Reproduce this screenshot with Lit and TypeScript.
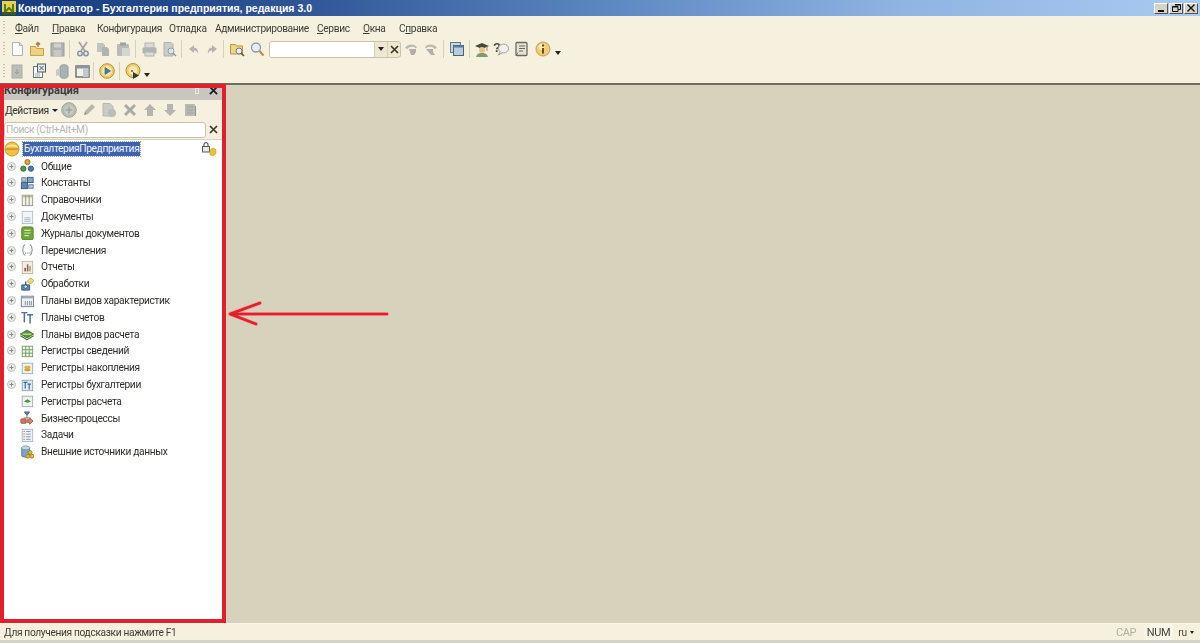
import { LitElement, html, css, svg } from "lit";
import { customElement } from "lit/decorators.js";

const ic: Record<string, any> = {
  doc: svg`<path d="M3.5 1.500h7l3 3v10h-10z" fill="#fdfdfb" stroke="#a9b3b8"/><path d="M10.500 1.500v3h3" fill="#dde4ea" stroke="#a9b3b8"/>`,
  open: svg`<path d="M1.500 5.500h5l1 2h7v7h-13z" fill="#efd27c" stroke="#c4a14f"/><path d="M9 6V2M7 3.500l2-2 2 2" fill="none" stroke="#b8762e" stroke-width="1.300"/>`,
  save: svg`<rect x="2" y="2" width="13" height="13" fill="#aeb3b1" stroke="#989d9b"/><rect x="5" y="2.500" width="7" height="4" fill="#d0d2cc"/><rect x="4.500" y="9" width="8" height="6" fill="#c6c8c2"/>`,
  cut: svg`<path d="M4 1l6 9M12 1L6 10" stroke="#a0a5a0" stroke-width="1.700" fill="none"/><circle cx="5" cy="12.500" r="2.200" fill="none" stroke="#8494a1" stroke-width="1.500"/><circle cx="11" cy="12.500" r="2.200" fill="none" stroke="#8494a1" stroke-width="1.500"/>`,
  copy: svg`<path d="M2 2h6l2 2v7H2z" fill="#c0c4c0"/><path d="M7 6h5l2 2v7H7z" fill="#afb4b0"/>`,
  paste: svg`<rect x="2" y="3" width="12" height="12" rx="1" fill="#b8bbb5"/><rect x="5" y="1.500" width="6" height="3" fill="#9ea39f"/><rect x="7" y="7" width="8" height="8" fill="#d3d5d0"/>`,
  print: svg`<rect x="4" y="2" width="9" height="5" fill="#dadad3" stroke="#b2b4af"/><rect x="1.500" y="6.500" width="14" height="6" rx="1" fill="#b0b4b0"/><rect x="4" y="11" width="9" height="4" fill="#dcdcd5" stroke="#b2b4af"/>`,
  preview: svg`<path d="M3 1.500h7l2 2V15H3z" fill="#c9ccc8" stroke="#afb2ae"/><circle cx="10" cy="10" r="3" fill="#e2e6e6" stroke="#959a9b"/><path d="M12 12l3 3" stroke="#959a9b" stroke-width="1.500"/>`,
  undo: svg`<path d="M8 4L3 8l5 4V9.500c2 0 3 1 4 3 .500-3-1-6-4-6z" fill="#b3b6b0"/>`,
  redo: svg`<path d="M8 4l5 4-5 4V9.500c-2 0-3 1-4 3-.500-3 1-6 4-6z" fill="#b3b6b0"/>`,
  findall: svg`<path d="M1.500 3.500h5l1 1.500h6v8h-12z" fill="#f0d77f" stroke="#b9953f"/><circle cx="10" cy="10" r="3" fill="#e8eef0" stroke="#6d7a80"/><path d="M12 12l3 3" stroke="#7c5a34" stroke-width="1.700"/>`,
  find: svg`<circle cx="7" cy="6.500" r="4.500" fill="#e6eef2" stroke="#8c9aa3" stroke-width="1.300"/><path d="M10.500 10l4 4.500" stroke="#b5924e" stroke-width="2.200"/>`,
  back: svg`<path d="M2 7c2-4 9-5 12-1l-1 1.500C11 5 6 5.500 4.500 8z" fill="#b7b9b1"/><path d="M6 8h7v3l-2 3H8z" fill="#aeb0a9"/>`,
  fwd: svg`<path d="M14 7c-2-4-9-5-12-1l1 1.500C5 5 10 5.500 11.500 8z" fill="#b7b9b1"/><path d="M3 8h7v3l2 3H8z" fill="#aeb0a9"/>`,
  windows: svg`<rect x="1.500" y="1.500" width="10" height="10" fill="#c6d6e5" stroke="#68798a"/><rect x="4.500" y="4.500" width="10" height="10" fill="#b9cbdc" stroke="#4f6172"/><rect x="4.500" y="4.500" width="10" height="2" fill="#5d7a98"/>`,
  student: svg`<path d="M1 5l7-3 7 3-7 3z" fill="#3f4a3c"/><circle cx="8" cy="9" r="3" fill="#e7c290"/><path d="M2 16c1-4 4-4 6-4s5 0 6 4z" fill="#7d9c6f"/><path d="M13 5v5" stroke="#b08a3a"/>`,
  helpq: svg`<text x="0" y="11" font-size="13" font-weight="700" font-family="Liberation Sans" fill="#4a4a42">?</text><ellipse cx="10.500" cy="7.500" rx="5" ry="4.500" fill="#eef0ec" stroke="#9ba098"/><path d="M7 11l-1.500 3 4-2.500" fill="#e6e8e2" stroke="#9ba098"/>`,
  book: svg`<rect x="3" y="1.500" width="11" height="13" rx="1" fill="#e5e3d8" stroke="#6a6a60" stroke-width="1.300"/><path d="M6 5h6M6 7.500h6M6 10h4" stroke="#6a6a60"/><path d="M3 14.500l2-3" stroke="#6a6a60"/>`,
  info: svg`<circle cx="8" cy="8" r="7" fill="#eecb7d" stroke="#c99c48"/><circle cx="6.500" cy="6" r="3" fill="#f8e8bb"/><rect x="7" y="7" width="2" height="5.500" fill="#6f4e12"/><rect x="7" y="3.500" width="2" height="2" fill="#6f4e12"/>`,
  gr1: svg`<rect x="3" y="2" width="10" height="13" fill="#bbbeb8" stroke="#abaea8"/><path d="M8 6v5M6 9l2 2 2-2" stroke="#999c97" fill="none"/>`,
  gr2: svg`<rect x="2.500" y="3.500" width="9" height="11" fill="#fff" stroke="#6f7a80"/><rect x="6.500" y="1" width="8" height="8" fill="#e2e7ea" stroke="#4e5c66"/><path d="M8.500 3l4 4M12.500 3l-4 4" stroke="#4e5c66"/><path d="M4 11h5M4 13h5" stroke="#93a0a8"/>`,
  db: svg`<path d="M6 4c0-3 8-3 8 0v9c0 3-8 3-8 0z" fill="#a9b3b6" stroke="#8f999c"/><path d="M2 7l4-2v7l-4 1z" fill="#c5cac6"/>`,
  wnd: svg`<rect x="2" y="3" width="13" height="11" fill="#f2f2ea" stroke="#5a6269" stroke-width="1.300"/><rect x="2" y="3" width="13" height="2.500" fill="#8a959e"/><rect x="9" y="6" width="5.500" height="8" fill="#c2c9cd"/>`,
  play: svg`<circle cx="8" cy="8" r="7.300" fill="#f0cb6a" stroke="#b98f36"/><circle cx="8" cy="8" r="5" fill="#f9e6a8"/><path d="M6 4.500l5.500 3.500L6 11.500z" fill="#3d7fb5" stroke="#2a5a85" stroke-width=".6"/>`,
  debug: svg`<circle cx="8" cy="7.500" r="7" fill="#f0cb6a" stroke="#b98f36"/><circle cx="8" cy="7.500" r="4.500" fill="#f9e9b0"/><circle cx="7" cy="8" r="1" fill="#6b5a20"/><path d="M8 9l6 3.500L8 16z" fill="#2c3a44"/>`,
  conf: svg`<circle cx="8" cy="8" r="7" fill="#f0c243" stroke="#c69a2f"/><path d="M2 6.500c2-4 10-4 12 0-3-1.500-9-1.500-12 0z" fill="#fbe9a4"/><rect x="1.500" y="7.500" width="13" height="1.200" fill="#b98c24"/>`,
  common: svg`<circle cx="8.500" cy="3.500" r="3" fill="#d9a23a" stroke="#9b7020"/><circle cx="3.800" cy="11" r="3" fill="#4e9a45" stroke="#2f6b2a"/><circle cx="12.500" cy="11" r="3" fill="#4a7cb0" stroke="#2f5680"/>`,
  consts: svg`<rect x="1.500" y="7.500" width="7" height="7" fill="#5e86ad" stroke="#355a7e"/><rect x="8.500" y="1.500" width="6.500" height="6" fill="#7fa3c4" stroke="#355a7e"/><rect x="2" y="2" width="5" height="4" fill="#b7c9d8" stroke="#5a7995"/><rect x="10" y="10" width="5" height="4" fill="#b7c9d8" stroke="#5a7995"/>`,
  refs: svg`<rect x="2.500" y="2.500" width="12" height="12" fill="#f2f0e2" stroke="#8e9188"/><rect x="2.500" y="2.500" width="12" height="2.500" fill="#c2b98a"/><path d="M6.500 2.500v12M10.500 2.500v12" stroke="#8e9188"/>`,
  docs: svg`<rect x="2.500" y="1.500" width="12" height="14" fill="#f2f5f8" stroke="#b1bcc6"/><path d="M5 9h7M5 11h7M5 13h7" stroke="#a3b2bf"/>`,
  journal: svg`<rect x="2" y="1" width="13" height="15" rx="2" fill="#6ea53a" stroke="#4c8027"/><path d="M5 5h7M5 8h7M5 11h5" stroke="#d8e8a8" stroke-width="1.300"/>`,
  enums: svg`<path d="M6 2C3 2 4 6 3 8c1 2 0 6 3 6M11 2c3 0 2 4 3 6-1 2 0 6-3 6" fill="none" stroke="#6c7379"/><path d="M6 11.500h1M8.500 11.500h1M11 11.500h1" stroke="#333"/>`,
  reports: svg`<rect x="2.500" y="1.500" width="12" height="14" fill="#f4eee0" stroke="#bcb5a0"/><rect x="5" y="9" width="1.800" height="4" fill="#a04a3a"/><rect x="7.800" y="5" width="1.800" height="8" fill="#5f6f9a"/><rect x="10.500" y="7" width="1.800" height="6" fill="#c19a3c"/>`,
  proc: svg`<path d="M8 5l4-4 4 3-4 4z" fill="#f0d77f" stroke="#c4a64a"/><path d="M2 9h9v6H2z" fill="#5e8cb8" stroke="#2d5680"/><circle cx="6.500" cy="11" r="2" fill="#e4edf3" stroke="#2d5680"/><path d="M6.500 5v4" stroke="#2d5680" stroke-width="1.500"/>`,
  pvh: svg`<rect x="1.500" y="2.500" width="14" height="12" fill="#eef1f3" stroke="#6c7a86"/><rect x="1.500" y="2.500" width="14" height="2.500" fill="#9aa9b6"/><path d="M6 8v5M8.500 8v5M11 8v5M13 8v5" stroke="#798895"/>`,
  accounts: svg`<path d="M1.500 3h7M5 3v11M8 5.500h7M11.500 5.500v10" fill="none" stroke="#4d7090" stroke-width="1.700"/>`,
  pvr: svg`<path d="M0.500 8L8 3.500 15.500 8 8 12.500z" fill="#55963f" stroke="#3a7329"/><path d="M3 8.200h10" stroke="#e6d77f" stroke-width="1.500"/><path d="M0.500 10L8 14.500 15.500 10" fill="none" stroke="#3a7329" stroke-width="1.300"/>`,
  regs: svg`<rect x="2.500" y="2.500" width="12" height="12" fill="#eef4e2" stroke="#7d936a"/><path d="M2.500 6.500h12M2.500 10.500h12M6.500 2.500v12M10.500 2.500v12" stroke="#6c9a58"/>`,
  accum: svg`<rect x="2.500" y="2.500" width="12" height="12" fill="#edf1f3" stroke="#9aa9b4"/><ellipse cx="8.500" cy="7" rx="3.500" ry="1.700" fill="#e0b03c"/><ellipse cx="8.500" cy="10" rx="3.500" ry="1.700" fill="#d39f2a"/>`,
  buh: svg`<rect x="2.500" y="2.500" width="12" height="12" fill="#dfeaf3" stroke="#84a0b8"/><path d="M4 5h4.500M6 5v7M8.500 7h4M10.500 7v6" fill="none" stroke="#3a6890" stroke-width="1.300"/>`,
  calc: svg`<rect x="2.500" y="2.500" width="12" height="12" fill="#eef2f3" stroke="#9aa9b4"/><path d="M4.500 8.500L8.500 6l4 2.500-4 1.500z" fill="#4e9038"/>`,
  biz: svg`<path d="M5 1h6L8 5z" fill="#6d86a3" stroke="#47607c"/><path d="M8 5v3M4 8h8" stroke="#5d6a76"/><rect x="1" y="9" width="6" height="5" rx="1" fill="#d9765a" stroke="#a34c33"/><path d="M8 10h3V8l4 3.500-4 3.500v-2H8z" fill="#d98a6e" stroke="#a8583c"/>`,
  tasks: svg`<rect x="2.500" y="1.500" width="12" height="14" fill="#eaf0f5" stroke="#a9b7c3"/><path d="M7 4h5M7 7h5M7 10h5M7 13h5" stroke="#7f93a5"/><path d="M4 4h1.500M4 7h1.500M4 10h1.500M4 13h1.500" stroke="#c0703a"/>`,
  ext: svg`<path d="M2 3c0-2.500 9-2.500 9 0v9c0 2.500-9 2.500-9 0z" fill="#7ea5c6" stroke="#4c7294"/><ellipse cx="6.500" cy="3" rx="4.500" ry="1.500" fill="#c5d8e6"/><circle cx="11.500" cy="8.500" r="2.200" fill="#e5b93c" stroke="#a27f1f"/><circle cx="9" cy="12.800" r="2.200" fill="#e5b93c" stroke="#a27f1f"/><circle cx="13.500" cy="12.800" r="2.200" fill="#e5b93c" stroke="#a27f1f"/>`,
  lock: svg`<rect x="1.500" y="5.500" width="7" height="5.500" fill="#e8e8e4" stroke="#5c5c58"/><path d="M3 5.500V3.500c0-2.500 4-2.500 4 0v2" fill="none" stroke="#5c5c58" stroke-width="1.200"/><path d="M9 9l3-2 3 1.500v4L12 15l-3-1.500z" fill="#eec333" stroke="#c09a20" stroke-width=".6"/>`,
  add: svg`<circle cx="8" cy="8" r="7.300" fill="#b9bcb2" stroke="#a3a69c"/><circle cx="8" cy="8" r="4.800" fill="#c9ccc2"/><path d="M8 4.500v7M4.500 8h7" stroke="#a0a399" stroke-width="1.600"/>`,
  edit: svg`<path d="M3 13l1-4 7-7 3 3-7 7z" fill="#b6b9b0"/><path d="M3 13l1-3 2 2z" fill="#8d9087"/>`,
  clone: svg`<path d="M2 1.500h7l3 3V14H2z" fill="#c9ccc6" stroke="#b5b8b2"/><circle cx="11" cy="11" r="4" fill="#babdb5"/>`,
  del: svg`<path d="M3 3l10 10M13 3L3 13" stroke="#a8aba4" stroke-width="3"/>`,
  up: svg`<path d="M8 2l6 6h-3v6H5V8H2z" fill="#b3b6ae"/>`,
  down: svg`<path d="M8 14l6-6h-3V2H5v6H2z" fill="#b3b6ae"/>`,
  sort: svg`<rect x="3" y="2" width="10" height="12" fill="#b7bab2"/><path d="M5 5h6M5 8h6M5 11h6" stroke="#9fa29a"/><path d="M13.500 4v10" stroke="#8f9289"/>`,
};

const I = (n: string, s = 16) => html`<svg class="ico" width=${s} height=${s} viewBox="0 0 16 16">${ic[n]}</svg>`;

const tree: [string, string, boolean][] = [
  ["common", "Общие", true], ["consts", "Константы", true], ["refs", "Справочники", true],
  ["docs", "Документы", true], ["journal", "Журналы документов", true], ["enums", "Перечисления", true],
  ["reports", "Отчеты", true], ["proc", "Обработки", true], ["pvh", "Планы видов характеристик", true],
  ["accounts", "Планы счетов", true], ["pvr", "Планы видов расчета", true], ["regs", "Регистры сведений", true],
  ["accum", "Регистры накопления", true], ["buh", "Регистры бухгалтерии", true], ["calc", "Регистры расчета", false],
  ["biz", "Бизнес-процессы", false], ["tasks", "Задачи", false], ["ext", "Внешние источники данных", false],
];

@customElement("app-root")
export class AppRoot extends LitElement {
  static styles = css`
    :host { display: block; width: 1200px; height: 643px; overflow: hidden; position: relative; background: #f5f1de; font-family: Roboto, "Liberation Sans", sans-serif; font-size: 10.200px; letter-spacing: -0.350px; color: #33342f; }
    .app { display: flex; flex-direction: column; height: 643px; filter: blur(0.4px); }
    .ico { display: block; flex: none; }
    .title { height: 16px; flex: none; display: flex; align-items: center; padding: 0 2px 0 2px; background: linear-gradient(90deg, #143a80 0%, #2f5596 25%, #5c86c0 50%, #8fb4e2 75%, #a8cbf0 100%); }
    .title-text { margin-left: 2px; color: #fff; font: bold 10.500px "Liberation Sans", sans-serif; letter-spacing: 0; white-space: nowrap; }
    .win { margin-left: auto; display: flex; gap: 1px; }
    .win-btn { width: 14px; height: 11px; background: #d6d3c8; border: 1px solid; border-color: #fff #55544e #55544e #fff; box-sizing: border-box; display: flex; align-items: center; justify-content: center; }
    .chrome { height: 65px; flex: none; margin-top: 2px; display: flex; flex-direction: column; }
    .bar { display: flex; align-items: center; padding-left: 3px; }
    .menu { height: 20px; }
    .tb { height: 22px; }
    .grip { width: 2px; height: 15px; flex: none; background: repeating-linear-gradient(180deg, #c2bea4 0 1px, transparent 1px 3px); margin-right: 2px; }
    .mi { white-space: nowrap; color: #3d3e38; }
    .mi u { text-decoration: underline; }
    .m1 { margin-left: 8px; width: 37px; } .m2 { width: 45px; } .m3 { width: 72px; } .m4 { width: 46px; } .m5 { width: 102px; } .m6 { width: 46px; } .m7 { width: 36px; } .m8 { width: 50px; }
    .cell { width: 20px; height: 20px; flex: none; display: flex; align-items: center; justify-content: center; }
    .cell.nar { width: 18px; }
    .cell.wide { width: 23px; }
    .sep { width: 1px; height: 18px; flex: none; background: #d6d2ba; margin: 0 3px 0 2px; }
    .combo { width: 132px; height: 17px; flex: none; margin-left: 2px; display: flex; box-sizing: border-box; border: 1px solid #c8c4ab; border-radius: 3px; background: #ece8d2; overflow: hidden; }
    .combo-in { flex: 1; background: #fff; }
    .combo-b { width: 12px; display: flex; align-items: center; justify-content: center; border-left: 1px solid #d4d0b8; }
    .caret { width: 0; height: 0; border: 3.500px solid transparent; border-top: 4px solid #222; border-bottom: 0; flex: none; }
    .more { margin: 8px 0 0 1px; }
    .dark { height: 2px; flex: none; background: #6f6e5a; }
    .mid { flex: 1; min-height: 0; display: flex; background: #d6d2bb; }
    .panel { width: 222px; margin-left: 1px; flex: none; display: flex; flex-direction: column; background: #fff; margin-bottom: 1px; }
    .ph { height: 15px; flex: none; margin-left: 3px; background: #c9c6c0; display: flex; align-items: flex-start; justify-content: space-between; font: bold 11px Roboto, sans-serif; letter-spacing: 0; color: #3a3a38; line-height: 11px; }
    .ph-r { display: flex; align-items: center; gap: 10px; padding-right: 5px; padding-top: 1px; }
    .pin { width: 2px; height: 4px; border: 1px solid #e8e8e8; }
    .act { height: 20px; flex: none; margin-left: 3px; background: #f5f1de; display: flex; align-items: center; padding-left: 1px; }
    .act-l { width: 54px; flex: none; display: flex; align-items: center; gap: 3px; color: #33342f; }
    .act .caret { border-width: 3px; border-top-width: 3px; border-bottom: 0; }
    .act .ac { width: 20.200px; height: 20px; flex: none; display: flex; align-items: center; justify-content: center; }
    .sr { height: 19px; flex: none; margin-left: 3px; background: #f5f1de; display: flex; align-items: center; }
    .sr-box { flex: 1; height: 16px; box-sizing: border-box; background: #fff; border: 1px solid #c8c4ab; border-radius: 3px; display: flex; align-items: center; color: #b6b6b2; padding-left: 1px; }
    .sr-x { width: 14px; height: 16px; margin-right: 3px; display: flex; align-items: center; justify-content: center; }
    .tree { flex: 1; margin-left: 3px; padding-top: 1px; background: #fff; border-top: 1px solid #d8d4bd; }
    .row { height: 16.800px; display: flex; align-items: center; position: relative; color: #2e2f2b; white-space: nowrap; }
    .exp { width: 9px; height: 9px; flex: none; margin-left: 2.500px; }
    .noexp { width: 9px; flex: none; margin-left: 2.500px; }
    .row .ico { margin-left: 4.500px; }
    .lbl { margin-left: 7px; }
    .root .ico { margin-left: 0; }
    .selected { margin-left: 3px; background: #3d62ae; color: #f4f6fb; padding: 1px 1px; outline: 1px dotted #8fa4c8; line-height: 12px; }
    .lock { margin-left: auto; margin-right: 6px; align-self: flex-start; }
    .empty { flex: 1; }
    .status { height: 17px; flex: none; display: flex; align-items: center; padding-left: 4px; border-top: 1px solid #fbf8ea; background: #f5f1de; box-sizing: border-box; color: #3d3e38; }
    .st { box-sizing: border-box; height: 16px; display: flex; align-items: center; justify-content: center; }
    .cap { margin-left: auto; width: 28px; color: #b3b19c; font-size: 11px; }
    .num { width: 29px; margin-left: 4px; background: #f9f6e8; color: #44453f; font-size: 11px; }
    .ru { width: 24px; margin-left: 1px; margin-right: 2px; gap: 3px; color: #44453f; }
    .ru .caret { border-width: 2.500px; border-top-width: 3px; border-bottom: 0; }
    .bottom { flex: none; height: 3px; background: #d5d2c8; }
    .annot { position: absolute; left: 0; top: 84px; width: 226px; height: 539px; box-sizing: border-box; border: 4px solid #e1202c; pointer-events: none; }
    .arrow { position: absolute; left: 224px; top: 296px; pointer-events: none; }
  `;

  render() {
    const exp = html`<svg class="exp" viewBox="0 0 9 9"><circle cx="4.500" cy="4.500" r="4" fill="#ecece6" stroke="#c2c2ba"/><path d="M2.500 4.500h4M4.500 2.500v4" stroke="#888"/></svg>`;
    const x = html`<svg width="9" height="9" viewBox="0 0 9 9"><path d="M1 1l7 7M8 1L1 8" stroke="#3a3a28" stroke-width="1.700"/></svg>`;
    const c = (n: string) => html`<span class="cell">${I(n)}</span>`;
    const cn = (n: string) => html`<span class="cell nar">${I(n)}</span>`;
    const cw = (n: string) => html`<span class="cell wide">${I(n)}</span>`;
    const sep = html`<span class="sep"></span>`;
    return html`<div class="app">
      <div class="title">
        <svg width="14" height="14" viewBox="0 0 14 14"><rect width="14" height="14" fill="#e8d24a"/><path d="M3 3v8l4-4 4 4V3" fill="none" stroke="#5a7a20" stroke-width="2"/><rect x="0" y="11" width="14" height="3" fill="#3a5a1c"/></svg>
        <span class="title-text">Конфигуратор - Бухгалтерия предприятия, редакция 3.0</span>
        <div class="win">
          <span class="win-btn"><svg width="8" height="7" viewBox="0 0 8 7"><rect x="1" y="5" width="6" height="2" fill="#111"/></svg></span>
          <span class="win-btn"><svg width="9" height="8" viewBox="0 0 9 8"><path d="M3 .5h5.500v5H6M.5 2.500h5.500v5H.5z" fill="none" stroke="#111"/><path d="M3 1h5.500M.5 3h5.500" stroke="#111"/></svg></span>
          <span class="win-btn"><svg width="8" height="8" viewBox="0 0 8 8"><path d="M.5.5l7 7M7.500.5l-7 7" stroke="#111" stroke-width="1.400"/></svg></span>
        </div>
      </div>
      <div class="chrome">
        <div class="bar menu"><span class="grip"></span>
          <span class="mi m1"><u>Ф</u>айл</span><span class="mi m2"><u>П</u>равка</span><span class="mi m3">Конфигурация</span><span class="mi m4">Отладка</span><span class="mi m5">Администрирование</span><span class="mi m6"><u>С</u>ервис</span><span class="mi m7"><u>О</u>кна</span><span class="mi m8">С<u>п</u>равка</span>
        </div>
        <div class="bar tb"><span class="grip"></span>
          ${c("doc")}${c("open")}${c("save")}${sep}${c("cut")}${c("copy")}${c("paste")}${sep}${c("print")}${c("preview")}${sep}${cn("undo")}${cn("redo")}${sep}${c("findall")}${c("find")}
          <div class="combo"><span class="combo-in"></span><span class="combo-b"><span class="caret"></span></span><span class="combo-b">${x}</span></div>
          ${c("back")}${c("fwd")}${sep}${c("windows")}${sep}${cn("student")}${c("helpq")}${c("book")}${cw("info")}<span class="caret more"></span>
        </div>
        <div class="bar tb"><span class="grip"></span>
          ${c("gr1")}${cw("gr2")}${cw("db")}${cn("wnd")}${sep}${c("play")}${sep}${c("debug")}<span class="caret more"></span>
        </div>
      </div>
      <div class="dark"></div>
      <div class="mid">
        <div class="panel">
          <div class="ph"><span>Конфигурация</span><span class="ph-r"><span class="pin"></span><svg width="9" height="9" viewBox="0 0 10 10"><path d="M1 1l8 8M9 1L1 9" stroke="#1c1c1c" stroke-width="2"/></svg></span></div>
          <div class="act">
            <span class="act-l">Действия<span class="caret"></span></span>
            <span class="ac">${I("add")}</span><span class="ac">${I("edit")}</span><span class="ac">${I("clone")}</span><span class="ac">${I("del")}</span><span class="ac">${I("up")}</span><span class="ac">${I("down")}</span><span class="ac">${I("sort")}</span>
          </div>
          <div class="sr"><span class="sr-box">Поиск (Ctrl+Alt+M)</span><span class="sr-x">${x}</span></div>
          <div class="tree">
            <div class="row root">${I("conf")}<span class="selected">БухгалтерияПредприятия</span><span class="lock">${I("lock")}</span></div>
            ${tree.map(([i, t, e]) => html`<div class="row">${e ? exp : html`<span class="noexp"></span>`}${I(i, 14)}<span class="lbl">${t}</span></div>`)}
          </div>
        </div>
        <div class="empty"></div>
      </div>
      <div class="status"><span>Для получения подсказки нажмите F1</span>
        <span class="st cap">CAP</span><span class="st num">NUM</span><span class="st ru">ru<span class="caret"></span></span>
      </div>
      <div class="bottom"></div>
    </div>
    <div class="annot"></div>
    <svg class="arrow" width="170" height="34" viewBox="0 0 170 34"><path d="M163 18H6M6 18L36 7M6 18L32 28" fill="none" stroke="#f29a9a" stroke-width="4" stroke-linecap="round"/><path d="M163 18H6M6 18L36 7M6 18L32 28" fill="none" stroke="#e1202c" stroke-width="2.500" stroke-linecap="round"/></svg>`;
  }
}
